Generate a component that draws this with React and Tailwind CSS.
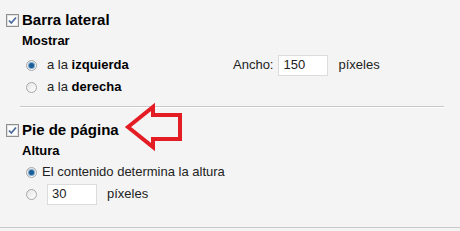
import React from "react";

function Checkbox() {
  return (
    <svg width="13" height="13" viewBox="0 0 13 13" className="shrink-0">
      <rect x="0.5" y="0.5" width="12" height="12" fill="#fdfdfd" stroke="#8e8f8f" />
      <rect x="1.5" y="1.5" width="10" height="10" fill="none" stroke="#e2e2e2" />
      <path d="M3 6.5 L5.3 9 L10 3.5" fill="none" stroke="#4b6b9c" strokeWidth="1.8" />
    </svg>
  );
}

function Radio({ checked }) {
  return (
    <span className="w-[11px] h-[11px] rounded-full border border-[#a7a7a7] bg-gradient-to-br from-[#e4e4e4] to-[#ffffff] flex items-center justify-center shrink-0">
      {checked && (
        <span className="w-[5px] h-[5px] rounded-full bg-[#1d5c94] ring-1 ring-[#79a8cf]" />
      )}
    </span>
  );
}

function SmallInput({ value }) {
  return (
    <div className="w-[50px] h-[21px] bg-white border border-[#dcdcdc] pl-[4px] flex items-center text-[13px] text-[#222]">
      {value}
    </div>
  );
}

export default function App() {
  return (
    <div
      className="relative w-[460px] h-[231px] bg-[#f4f4f4] overflow-hidden text-[#222]"
      style={{ fontFamily: '"Liberation Sans", Arial, sans-serif' }}
    >
      <div className="pt-[11px]">
        <div className="flex items-center gap-[3px] pl-[6px] h-[18px] leading-[18px]">
          <Checkbox />
          <span className="text-[15px] font-bold text-black">Barra lateral</span>
        </div>
        <div className="pl-[22px]">
          <div className="mt-[4px] text-[13px] leading-[16px] font-bold text-black">Mostrar</div>
          <div className="mt-[5px] flex items-center h-[22px] pl-[4px]">
            <Radio checked />
            <span className="ml-[10px] w-[186px] text-[13px]">
              a la <b className="text-black">izquierda</b>
            </span>
            <span className="text-[13px]">Ancho:</span>
            <div className="ml-[5px]">
              <SmallInput value="150" />
            </div>
            <span className="ml-[10px] text-[13px]">píxeles</span>
          </div>
          <div className="flex items-center h-[22px] pl-[4px]">
            <Radio />
            <span className="ml-[10px] text-[13px]">
              a la <b className="text-black">derecha</b>
            </span>
          </div>
        </div>
        <div className="mt-[8px] ml-[20px] w-[424px] h-px bg-[#c8c8c8]" />
        <div className="ml-[20px] w-[424px] h-px bg-white" />

        <div className="mt-[13px] flex items-center gap-[3px] pl-[6px] h-[18px] leading-[18px]">
          <Checkbox />
          <span className="text-[15px] font-bold text-black">Pie de página</span>
        </div>
        <div className="pl-[22px]">
          <div className="mt-[4px] text-[13px] leading-[16px] font-bold text-black">Altura</div>
          <div className="mt-[2px] flex items-center h-[22px] pl-[4px]">
            <Radio checked />
            <span className="ml-[5px] text-[13px]">El contenido determina la altura</span>
          </div>
          <div className="flex items-center h-[22px] pl-[4px]">
            <Radio />
            <div className="ml-[10px]">
              <SmallInput value="30" />
            </div>
            <span className="ml-[10px] text-[13px]">píxeles</span>
          </div>
        </div>
      </div>
      <div className="absolute left-0 right-0 top-[227px] h-px bg-[#c8c8c8]" />

      <svg
        className="absolute left-[124px] top-[102px]"
        width="62"
        height="52"
        viewBox="0 0 62 52"
      >
        <polygon
          points="4,25 29,5 29,13 56,13 56,37 29,37 29,45"
          fill="none"
          stroke="#e41d25"
          strokeWidth="4"
          strokeLinejoin="miter"
        />
      </svg>
    </div>
  );
}
